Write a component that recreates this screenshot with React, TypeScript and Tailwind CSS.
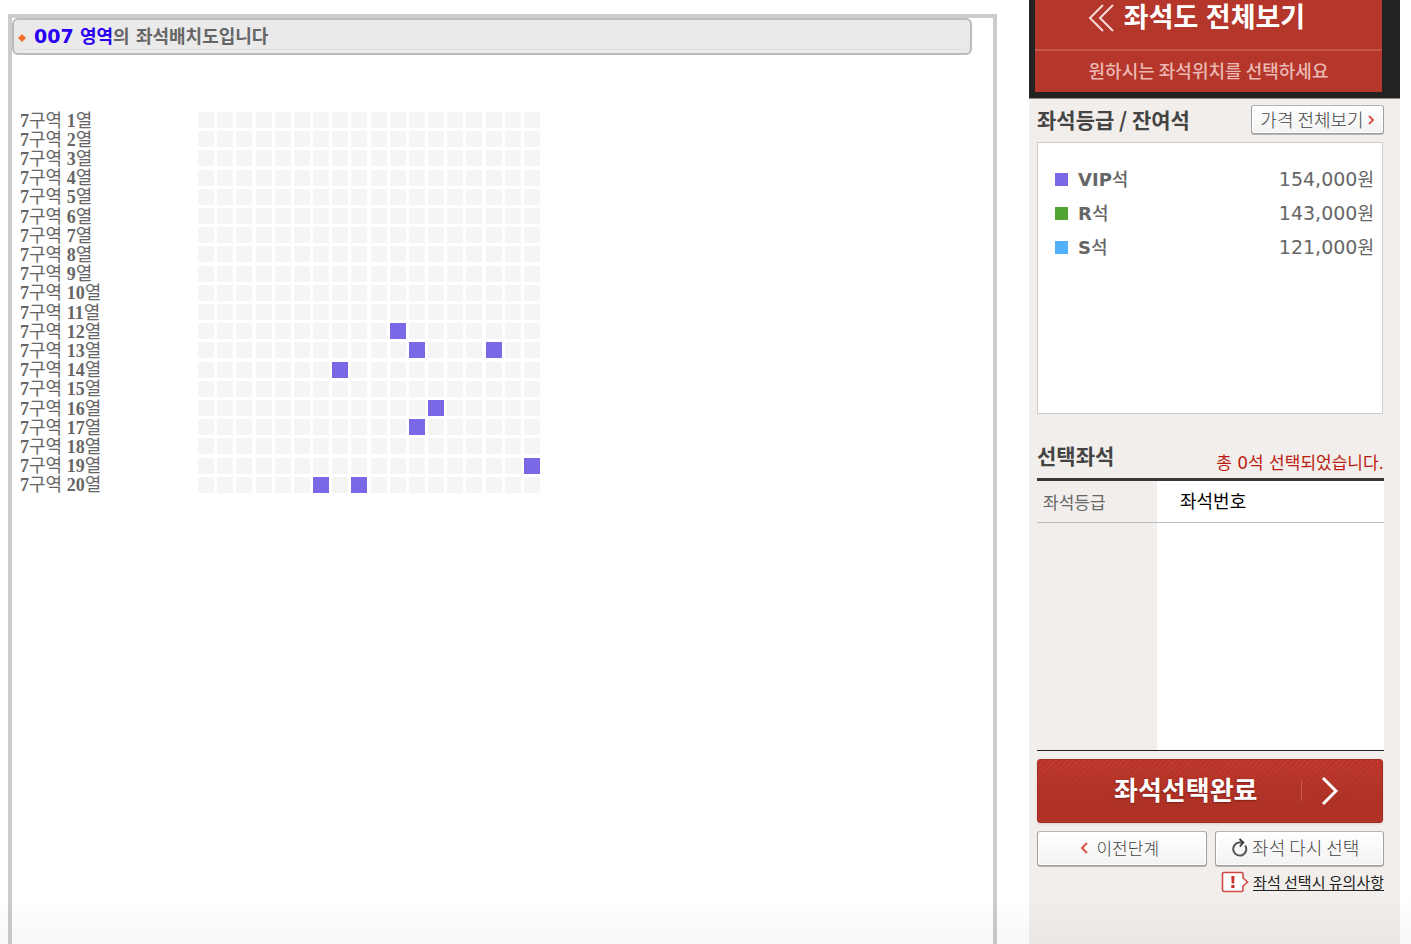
import React from "react";

const ROW_COUNT = 20;
const COLUMN_COUNT = 18;

const openSeats: Record<number, number[]> = {
  12: [11],
  13: [12, 16],
  14: [8],
  16: [13],
  17: [12],
  19: [18],
  20: [7, 9],
};

const grades = [
  { code: "VIP", price: "154,000", swatch: "bg-[#7a69e6]" },
  { code: "R", price: "143,000", swatch: "bg-[#50a532]" },
  { code: "S", price: "121,000", swatch: "bg-[#53b0fb]" },
];

const range = (n: number) => Array.from({ length: n }, (_, i) => i + 1);

const grayButton =
  "flex items-center justify-center rounded-[3px] border border-[#a0a0a0] border-t-[#b4b4b4] bg-linear-to-b from-white to-[#f3f2f1] font-light text-[#444] shadow-[inset_0_0_0_1px_#fff,0_1px_0_#b8b6b4]";

function SeatRow({ row }: { row: number }) {
  const open = openSeats[row] ?? [];
  return (
    <div className="flex h-4">
      <div className="flex w-[178px] items-center pt-px whitespace-nowrap font-['Liberation_Serif','Noto_Sans_CJK_KR',serif] text-[18px] leading-4 text-[#666]">
        <b>7</b>
        <span>구역</span>
        <b className="whitespace-pre"> {row}</b>
        <span>열</span>
      </div>
      <div className="flex w-[342px] justify-between">
        {range(COLUMN_COUNT).map((col) =>
          open.includes(col) ? (
            <button key={col} type="button" aria-label={`7구역 ${row}열 ${col}번`} className="size-4 bg-[#7a69e6]" />
          ) : (
            <span key={col} className="size-4 bg-[#f5f5f5]" />
          )
        )}
      </div>
    </div>
  );
}

function SeatMap() {
  return (
    <main className="mt-3.5 min-w-0 flex-1 border-4 border-b-0 border-[#ccc]">
      <h1 className="mr-[21px] flex h-[37px] items-center rounded-md border-2 border-[#bcbcbc] bg-[#eaeaea] pl-1 text-[18px] font-bold text-[#666] shadow-[inset_0_-3px_0_#eaeaea,inset_0_-4px_0_#dedede]">
        <svg className="mt-0.5 mr-2 size-2" viewBox="0 0 8 8" aria-hidden="true">
          <path d="M4 0 8 4 4 8 0 4Z" fill="#f07028" />
        </svg>
        <span className="whitespace-pre text-[#2a00f5]">
          <span className="text-[19px]">007</span> 영역
        </span>
        <span>의 좌석배치도입니다</span>
      </h1>
      <div className="mt-[57px] ml-2 flex h-[381px] flex-col justify-between">
        {range(ROW_COUNT).map((row) => (
          <SeatRow key={row} row={row} />
        ))}
      </div>
    </main>
  );
}

function PanelHeader() {
  return (
    <div className="h-[99px] border-b border-[#8c8a89] bg-[#222] pr-[18px] pb-1.5 pl-1.5">
      <a href="#map" className="flex h-[92px] flex-col bg-[#b5362a] text-white">
        <span className="flex h-[49px] items-center justify-center pr-6 pb-3.5 font-['Liberation_Sans','Noto_Sans_CJK_KR',sans-serif] text-[27px] leading-8 font-bold">
          <svg className="mr-2.5 h-7 w-[26px]" viewBox="0 0 26 28" fill="none" stroke="#f6dcd9" strokeWidth="2" aria-hidden="true">
            <path d="M15 1 2 14l13 13M25 1 12 14l13 13" />
          </svg>
          <span>좌석도 전체보기</span>
        </span>
        <span className="flex flex-1 items-center justify-center border-t-2 border-[#c4564b] pb-0.5 text-[18px] font-medium text-[#ebb9b4]">
          원하시는 좌석위치를 선택하세요
        </span>
      </a>
    </div>
  );
}

function GradeList() {
  return (
    <section>
      <div className="flex h-[43px] items-center justify-between pb-0.5">
        <h2 className="text-[21px] font-bold text-[#444]">좌석등급 / 잔여석</h2>
        <button type="button" className={`${grayButton} h-[29px] w-[133px] gap-1 text-[18px]`}>
          가격 전체보기
          <svg className="h-2.5 w-[7px]" viewBox="0 0 7 10" fill="none" stroke="#d9534a" strokeWidth="2" aria-hidden="true">
            <path d="m1 1 4 4-4 4" />
          </svg>
        </button>
      </div>
      <ul className="mr-px h-[272px] border border-[#ccc] bg-white pt-[19px] pr-2 pl-[17px]">
        {grades.map((g) => (
          <li key={g.code} className="flex h-[34px] items-center text-[18px] text-[#666]">
            <span className={`mr-2.5 size-[13px] ${g.swatch}`} />
            <b>{g.code}</b>
            <span className="font-medium">석</span>
            <span className="ml-auto text-[19px]">{g.price}</span>
            <span>원</span>
          </li>
        ))}
      </ul>
    </section>
  );
}

function SelectedSeats() {
  return (
    <section>
      <div className="flex h-16 items-end justify-between pb-[3px]">
        <h2 className="pb-1 text-[21px] font-bold text-[#444]">선택좌석</h2>
        <p className="text-[17px] leading-6 text-[#bb1d12]">총 0석 선택되었습니다.</p>
      </div>
      <table className="w-full border-collapse border-t-3 border-b border-t-[#383636] border-b-[#222] bg-white text-left">
        <thead>
          <tr className="h-[43px] border-b border-[#bbb]">
            <th scope="col" className="w-[120px] bg-[#f2eeeb] pt-1 pl-1.5 text-[17px] font-normal text-[#666]">
              좌석등급
            </th>
            <th scope="col" className="pl-[23px] text-[18px] font-normal text-black">
              좌석번호
            </th>
          </tr>
        </thead>
        <tbody>
          <tr className="h-[228px]">
            <td className="bg-[#f2eeeb]" />
            <td />
          </tr>
        </tbody>
      </table>
    </section>
  );
}

function Actions() {
  return (
    <div className="pt-2">
      <button
        type="button"
        className="flex h-16 w-[calc(100%-1px)] items-center rounded-[3px] border border-[#a52c22] bg-[linear-gradient(to_bottom,transparent,#b03226_60%),repeating-linear-gradient(135deg,#c23a30_0_2px,#b7342a_2px_4px)] pl-[76px] text-[26px] font-bold text-white shadow-sm"
      >
        <span className="pb-1.5 [text-shadow:0_1px_2px_#7a1f17]">좌석선택완료</span>
        <span className="ml-auto h-5 w-px bg-[#cc5b50]" />
        <svg className="mr-11 ml-[19px] h-[30px] w-[17px]" viewBox="0 0 17 30" fill="none" stroke="white" strokeWidth="3" aria-hidden="true">
          <path d="m2 2 13 13L2 28" />
        </svg>
      </button>
      <div className="mt-2 grid grid-cols-2 gap-2">
        <button type="button" className={`${grayButton} h-[35px] gap-2 pr-1 pb-0.5 text-[17px]`}>
          <svg className="h-3 w-2" viewBox="0 0 8 12" fill="none" stroke="#d9534a" strokeWidth="2" aria-hidden="true">
            <path d="M7 1 2 6l5 5" />
          </svg>
          이전단계
        </button>
        <button type="button" className={`${grayButton} h-[35px] gap-1 pr-2 pb-0.5 text-[18px]`}>
          <svg className="h-[19px] w-[17px]" viewBox="0 0 17 19" fill="none" aria-hidden="true">
            <path d="M14.200 7.500A6.500 6.500 0 1 1 8 4.600H11.500" stroke="#555" strokeWidth="2" />
            <path d="M8.500 1 12.300 4.600 8.800 8.500" stroke="#333" strokeWidth="1.800" />
          </svg>
          좌석 다시 선택
        </button>
      </div>
      <a href="#notice" className="mt-1 flex h-6 items-center justify-end gap-1 text-[15px] text-[#222]">
        <svg className="h-[22px] w-7" viewBox="0 0 28 22" aria-hidden="true">
          <path
            d="M3 1.500h17.500a1.500 1.500 0 0 1 1.500 1.500V7l4.500 4-4.500 4v4a1.500 1.500 0 0 1-1.500 1.500H3A1.500 1.500 0 0 1 1.500 19V3A1.500 1.500 0 0 1 3 1.500Z"
            fill="white"
            stroke="#cf4a44"
            strokeWidth="1.600"
          />
          <path d="M10.300 5h3.200l-.4 7.500h-2.400ZM10.300 14h3.200v3h-3.200Z" fill="#c8322c" />
        </svg>
        <span className="border-b border-[#222] leading-[17px]">좌석 선택시 유의사항</span>
      </a>
    </div>
  );
}

export default function App() {
  return (
    <div className="relative flex min-h-screen gap-8 bg-white pr-[11px] pl-2 font-['DejaVu_Sans','Noto_Sans_CJK_KR',sans-serif]">
      <SeatMap />
      <aside className="w-[371px] shrink-0 bg-[#f2eeeb]">
        <div className="font-['Noto_Sans_CJK_KR',sans-serif]">
          <PanelHeader />
        </div>
        <div className="pr-4 pl-2 [&_a]:font-['Noto_Sans_CJK_KR',sans-serif] [&_button]:font-['Noto_Sans_CJK_KR',sans-serif] [&_h2]:font-['Noto_Sans_CJK_KR',sans-serif]">
          <GradeList />
          <SelectedSeats />
          <Actions />
        </div>
      </aside>
      <div className="pointer-events-none absolute inset-x-0 bottom-0 h-12 bg-linear-to-b from-transparent to-black/3" />
    </div>
  );
}
